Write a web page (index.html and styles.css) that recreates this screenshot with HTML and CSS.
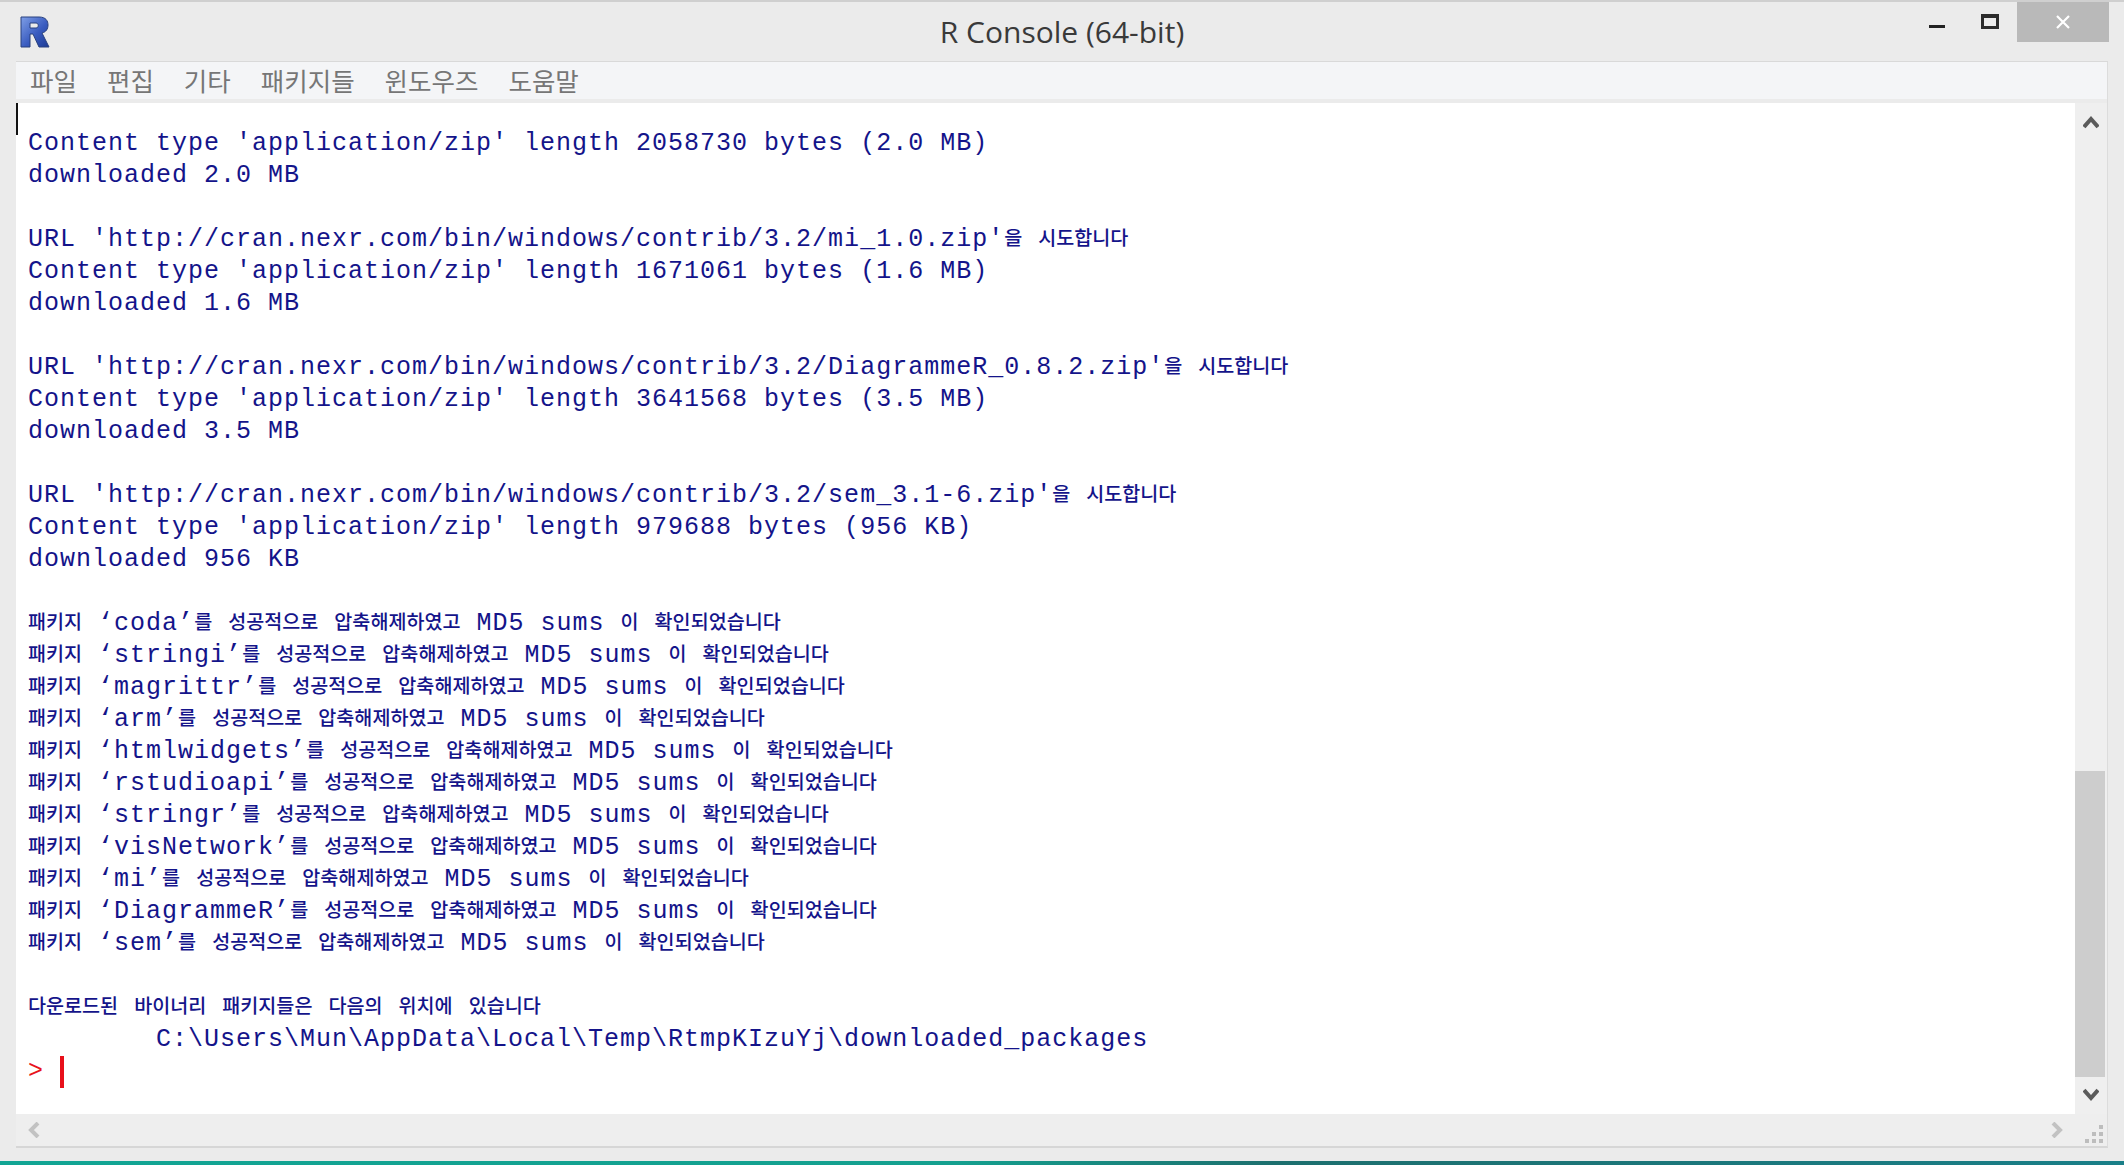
FILE: index.html
```html
<!DOCTYPE html>
<html lang="ko">
<head>
<meta charset="utf-8">
<title>R Console (64-bit)</title>
<link rel="stylesheet" href="styles.css">
</head>
<body>
<div class="window">
  <header class="titlebar">
    <div class="title-left">
      <svg class="r-logo" width="30" height="33" viewBox="0 0 30 33">
        <defs><linearGradient id="rg" x1="0" y1="0" x2="1" y2="1"><stop offset="0" stop-color="#7f9fe6"/><stop offset=".55" stop-color="#3a5cc0"/><stop offset="1" stop-color="#1c3a94"/></linearGradient></defs>
        <path d="M1 2H19C26 2 28 6 28 10C28 14 26 17 22 18L29 32H19L13 19H10V32H1ZM10 8V13H16C19 13 19 8 16 8Z" fill="url(#rg)" stroke="#28407e" stroke-width="1"/>
      </svg>
    </div>
    <div class="title">R Console (64-bit)</div>
    <div class="controls">
      <span class="btn-min"></span>
      <span class="btn-max"></span>
      <span class="btn-close"><svg width="16" height="16" viewBox="0 0 16 16"><path d="M2 2L14 14M14 2L2 14" stroke="#fff" stroke-width="2.2"/></svg></span>
    </div>
  </header>
  <div class="frame">
    <nav class="menubar">
      <span>파일</span><span>편집</span><span>기타</span><span>패키지들</span><span>윈도우즈</span><span>도움말</span>
    </nav>
    <div class="client">
      <main class="console"><span class="caret-top"></span>
<div class="line">Content type 'application/zip' length 2058730 bytes (2.0 MB)</div>
<div class="line">downloaded 2.0 MB</div>
<div class="line"> </div>
<div class="line">URL 'http://cran.nexr.com/bin/windows/contrib/3.2/mi_1.0.zip'<b>을</b> <b>시도합니다</b></div>
<div class="line">Content type 'application/zip' length 1671061 bytes (1.6 MB)</div>
<div class="line">downloaded 1.6 MB</div>
<div class="line"> </div>
<div class="line">URL 'http://cran.nexr.com/bin/windows/contrib/3.2/DiagrammeR_0.8.2.zip'<b>을</b> <b>시도합니다</b></div>
<div class="line">Content type 'application/zip' length 3641568 bytes (3.5 MB)</div>
<div class="line">downloaded 3.5 MB</div>
<div class="line"> </div>
<div class="line">URL 'http://cran.nexr.com/bin/windows/contrib/3.2/sem_3.1-6.zip'<b>을</b> <b>시도합니다</b></div>
<div class="line">Content type 'application/zip' length 979688 bytes (956 KB)</div>
<div class="line">downloaded 956 KB</div>
<div class="line"> </div>
<div class="line"><b>패키지</b> ‘coda’<b>를</b> <b>성공적으로</b> <b>압축해제하였고</b> MD5 sums <b>이</b> <b>확인되었습니다</b></div>
<div class="line"><b>패키지</b> ‘stringi’<b>를</b> <b>성공적으로</b> <b>압축해제하였고</b> MD5 sums <b>이</b> <b>확인되었습니다</b></div>
<div class="line"><b>패키지</b> ‘magrittr’<b>를</b> <b>성공적으로</b> <b>압축해제하였고</b> MD5 sums <b>이</b> <b>확인되었습니다</b></div>
<div class="line"><b>패키지</b> ‘arm’<b>를</b> <b>성공적으로</b> <b>압축해제하였고</b> MD5 sums <b>이</b> <b>확인되었습니다</b></div>
<div class="line"><b>패키지</b> ‘htmlwidgets’<b>를</b> <b>성공적으로</b> <b>압축해제하였고</b> MD5 sums <b>이</b> <b>확인되었습니다</b></div>
<div class="line"><b>패키지</b> ‘rstudioapi’<b>를</b> <b>성공적으로</b> <b>압축해제하였고</b> MD5 sums <b>이</b> <b>확인되었습니다</b></div>
<div class="line"><b>패키지</b> ‘stringr’<b>를</b> <b>성공적으로</b> <b>압축해제하였고</b> MD5 sums <b>이</b> <b>확인되었습니다</b></div>
<div class="line"><b>패키지</b> ‘visNetwork’<b>를</b> <b>성공적으로</b> <b>압축해제하였고</b> MD5 sums <b>이</b> <b>확인되었습니다</b></div>
<div class="line"><b>패키지</b> ‘mi’<b>를</b> <b>성공적으로</b> <b>압축해제하였고</b> MD5 sums <b>이</b> <b>확인되었습니다</b></div>
<div class="line"><b>패키지</b> ‘DiagrammeR’<b>를</b> <b>성공적으로</b> <b>압축해제하였고</b> MD5 sums <b>이</b> <b>확인되었습니다</b></div>
<div class="line"><b>패키지</b> ‘sem’<b>를</b> <b>성공적으로</b> <b>압축해제하였고</b> MD5 sums <b>이</b> <b>확인되었습니다</b></div>
<div class="line"> </div>
<div class="line"><b>다운로드된</b> <b>바이너리</b> <b>패키지들은</b> <b>다음의</b> <b>위치에</b> <b>있습니다</b></div>
<div class="line">        C:\Users\Mun\AppData\Local\Temp\RtmpKIzuYj\downloaded_packages</div>
<div class="line prompt">&gt; <span class="caret"></span></div>
      </main>
      <aside class="vscroll">
        <svg width="16" height="14" viewBox="0 0 16 14"><path d="M1 12L8 4L15 12" fill="none" stroke="#5b5b5b" stroke-width="4"/></svg>
        <div class="vtrack"><div class="vthumb"></div></div>
        <svg width="16" height="14" viewBox="0 0 16 14"><path d="M1 2L8 10L15 2" fill="none" stroke="#5b5b5b" stroke-width="4"/></svg>
      </aside>
      <div class="hscroll">
        <svg width="13" height="16" viewBox="0 0 13 16"><path d="M11 1L4 8L11 15" fill="none" stroke="#c2c2c2" stroke-width="4"/></svg>
        <svg width="13" height="16" viewBox="0 0 13 16"><path d="M2 1L9 8L2 15" fill="none" stroke="#c2c2c2" stroke-width="4"/></svg>
      </div>
      <div class="grip">
        <svg width="18" height="18" viewBox="0 0 18 18"><path d="M14 0h4v4h-4zM7 7h4v4H7zM14 7h4v4h-4zM0 14h4v4H0zM7 14h4v4H7zM14 14h4v4h-4z" fill="#bdbdbd"/></svg>
      </div>
    </div>
  </div>
</div>
</body>
</html>
```
FILE: styles.css
```css
* { box-sizing: border-box; }
html, body { margin: 0; height: 100%; overflow: hidden; }
body {
  background: linear-gradient(90deg, #12a594 0%, #14a08f 45%, #1d6f6e 60%, #1a7f88 100%);
}
.window {
  height: 1161px;
  background: #ebebeb;
  border-top: 2px solid #cfcfcf;
  display: flex;
  flex-direction: column;
  padding: 0 16px 13px;
}
.titlebar {
  height: 59px;
  flex: none;
  margin: 0 -16px;
  display: grid;
  grid-template-columns: 1fr auto 1fr;
  align-items: start;
}
.title-left { padding: 13px 0 0 20px; }
.r-logo { display: block; }
.title {
  font-family: "Open Sans", sans-serif;
  font-size: 30px;
  line-height: 42px;
  padding-top: 9px;
  color: #3a3a3a;
  white-space: nowrap;
}
.controls {
  justify-self: end;
  display: flex;
  align-items: flex-start;
  height: 40px;
  padding-right: 15px;
}
.btn-min {
  width: 16px;
  height: 3px;
  margin: 23px 36px 0 0;
  background: #222;
}
.btn-max {
  width: 18px;
  height: 15px;
  margin: 12px 18px 0 0;
  border: 3px solid #2b2b2b;
  border-top-width: 4px;
}
.btn-close {
  width: 92px;
  height: 40px;
  background: #b9b9b9;
  display: flex;
  align-items: center;
  justify-content: center;
}
.frame {
  flex: 1;
  display: flex;
  flex-direction: column;
  border-top: 1px solid #d9d9d9;
  border-bottom: 2px solid #d6d6d6;
  border-right: 1px solid #dcdcdc;
  min-height: 0;
}
.menubar {
  height: 37px;
  flex: none;
  background: #f4f5f7;
  display: flex;
  gap: 30px;
  padding: 0 0 2px 14px;
  align-items: center;
  font-family: "Noto Sans CJK KR", sans-serif;
  font-size: 25.5px;
  line-height: 35px;
  color: #767676;
}
.client {
  flex: 1;
  min-height: 0;
  margin-top: 4px;
  display: grid;
  grid-template-columns: 1fr 32px;
  grid-template-rows: 1fr 32px;
  background: #eeeeee;
}
.console {
  position: relative;
  background: #fff;
  padding: 25px 0 0 12px;
  overflow: hidden;
  font-family: "Liberation Mono", monospace;
  font-size: 25px;
  letter-spacing: 1px;
  line-height: 32px;
  color: #14148a;
}
.line { height: 32px; white-space: pre; }
.line b {
  font-family: "Noto Sans CJK KR", sans-serif;
  font-weight: 500;
  font-size: 19.6px;
  letter-spacing: 0;
  line-height: 20px;
  vertical-align: 1px;
}
.prompt { color: #e8141c; position: relative; }
.caret {
  position: absolute;
  left: 32px;
  top: 0;
  width: 4px;
  height: 32px;
  background: #e8101a;
}
.caret-top {
  position: absolute;
  left: 0;
  top: 0;
  width: 2px;
  height: 32px;
  background: #111;
}
.vscroll {
  display: flex;
  flex-direction: column;
  align-items: center;
  background: #efefef;
  padding: 12px 0;
}
.vtrack {
  flex: 1;
  width: 100%;
  display: flex;
  flex-direction: column;
  justify-content: flex-end;
  padding-bottom: 11px;
}
.vthumb { height: 306px; width: 30px; background: #cdcdcd; }
.hscroll {
  display: flex;
  align-items: center;
  justify-content: space-between;
  padding: 0 11px 0 11px;
  background: #eeeeee;
}
.grip {
  display: flex;
  align-items: center;
  justify-content: center;
  padding: 8px 0 0 6px;
}
```
